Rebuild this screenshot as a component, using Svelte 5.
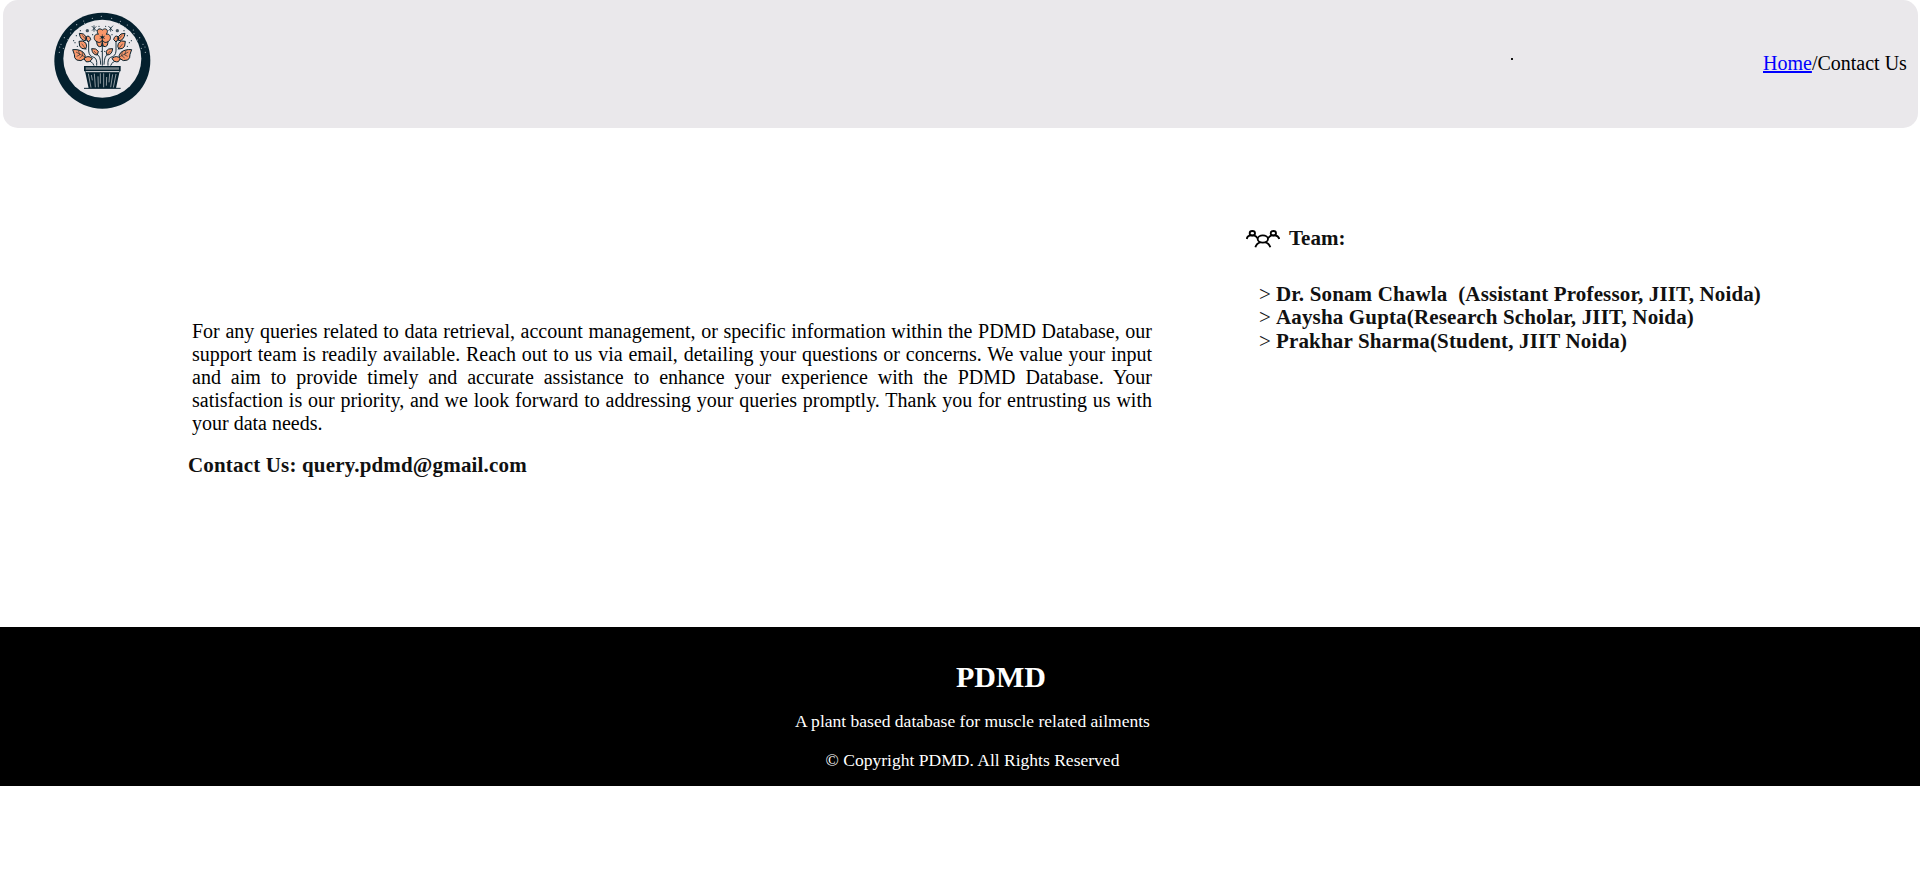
<script>
  const team = [
    'Dr. Sonam Chawla\u00a0 (Assistant Professor, JIIT, Noida)',
    'Aaysha Gupta(Research Scholar, JIIT, Noida)',
    'Prakhar Sharma(Student, JIIT Noida)'
  ];
  const rimDots = [
    [58, 157], [59, 141], [70, 145], [63, 133], [73, 113], [84, 119], [92, 99], [93, 89],
    [110, 74], [118, 82], [131, 63], [134, 70], [157, 55], [184, 49], [215, 55], [241, 64],
    [238, 71], [262, 75], [255, 83], [280, 90], [282, 101], [299, 113], [292, 120], [309, 133],
    [304, 145], [315, 141], [316, 157]
  ];
  const sparks = [
    [121, 92], [109, 107], [101, 122], [112, 139], [177, 79], [197, 79], [158, 104], [121, 128],
    [252, 92], [262, 107], [274, 122], [262, 139], [216, 104], [184, 154], [194, 154], [105, 128], [268, 128]
  ];
</script>

<header>
  <svg class="logo" viewBox="0 0 372 372" aria-hidden="true">
    <circle cx="187" cy="182" r="144" fill="#04202e" />
    <circle cx="187" cy="176" r="117" fill="#eae8eb" />
    {#each rimDots as [x, y]}
      <circle cx={x} cy={y} r="1.8" fill="#b3bcc2" />
    {/each}
    {#each sparks as [x, y]}
      <circle cx={x} cy={y} r="1.7" fill="#04202e" />
    {/each}
    <g fill="none" stroke="#04202e" stroke-width="2.7">
      <path d="M187 135V197M146 120V153Q147 169 162 172Q172 176 170 197M228 120V153Q227 169 212 172Q202 176 204 197M171 163Q182 168 182 194M203 163Q193 168 192 194M140 181Q157 183 162 197M234 181Q217 183 212 197" />
      <path stroke-width="2.2" d="M155 78L170 93M169 79L156 92M162 76V95M205 78L219 93M219 77L206 92M212 82V95" />
    </g>
    <circle cx="142" cy="92" r="5" fill="#435560" />
    <circle cx="232" cy="92" r="5" fill="#435560" />
    <g fill="#f9976a" stroke="#04202e" stroke-width="3" stroke-linejoin="round">
      <path d="M98 149Q119 147 131 158Q138 166 135 175Q123 186 110 180Q102 175 103 163Z" />
      <path d="M275 149Q254 147 242 158Q235 166 238 175Q250 186 263 180Q271 175 270 163Z" />
      <path d="M132 176Q143 164 157 175Q151 188 138 185ZM241 176Q230 164 216 175Q222 188 235 185Z" />
      <path d="M117 124Q130 119 138 130Q142 139 137 147Q123 148 119 138ZM256 124Q243 119 235 130Q231 139 236 147Q250 148 254 138Z" />
      <path d="M118 100Q132 99 138 110L137 122Q121 122 118 100ZM255 100Q241 99 235 110L236 122Q252 122 255 100Z" />
      <path d="M139 110Q149 104 152 119L145 126Q138 120 139 110ZM234 110Q224 104 221 119L228 126Q235 120 234 110Z" />
      <path d="M155 146Q169 144 175 154L172 165Q157 165 155 146ZM218 146Q204 144 198 154L201 165Q216 165 218 146Z" />
      <path d="M170 123Q170 144 184 139L187 127L190 139Q204 144 204 123Z" />
      <path d="M175 103C166 89 178 82 187 90C196 82 208 89 199 103C213 99 216 121 203 125C195 131 189 124 187 120C185 124 179 131 171 125C158 121 161 99 175 103Z" />
    </g>
    <g fill="none" stroke="#04202e" stroke-width="1.7">
      <path d="M108 156L135 171M115 151L119 165L110 169M126 154L128 167L119 174M265 156L238 171M258 151L254 165L263 169M247 154L245 167L254 174" />
      <path d="M125 131L139 149M248 131L234 149M127 106L144 126M246 106L229 126M162 153L171 163M211 153L202 163" />
      <path d="M187 103V120M179 108L195 116M195 108L179 116" />
      <path stroke-width="2.5" d="M187 118V139" />
    </g>
    <circle cx="187" cy="112" r="4" fill="#04202e" />
    <path d="M132 198H242V214H239L228 265H146L135 214H132Z" fill="#04202e" />
    <path d="M137 202H237V209H137Z" fill="#748087" />
    <path d="M137 215H237" stroke="#eae8eb" stroke-width="3" />
    <g fill="none" stroke="#d5d7da" stroke-width="2">
      <path d="M145 221L153 263M154 225L157 241M163 221L166 262M174 229L175 262M181 220V251M191 220V262M200 231L199 257M209 220L207 247M218 223L212 262M228 222L220 263" />
    </g>
    <path d="M132 265H242" stroke="#04202e" stroke-width="3" />
  </svg>
  <span class="speck"></span>
  <nav><a href="#home">Home</a>/Contact Us</nav>
</header>

<main>
  <section class="about">
    <p>For any queries related to data retrieval, account management, or specific information within the PDMD Database, our support team is readily available. Reach out to us via email, detailing your questions or concerns. We value your input and aim to provide timely and accurate assistance to enhance your experience with the PDMD Database. Your satisfaction is our priority, and we look forward to addressing your queries promptly. Thank you for entrusting us with your data needs.</p>
    <div class="mail">Contact Us: query.pdmd@gmail.com</div>
  </section>
  <section class="team">
    <div class="title">
      <svg viewBox="0 0 102 54" fill="none" stroke="#000" stroke-width="5.5" aria-hidden="true">
        <ellipse cx="19" cy="10" rx="8" ry="7" />
        <ellipse cx="82" cy="10" rx="8" ry="7" />
        <path d="M2 27Q4 17 14 16H24Q31 18 35 25M100 27Q97 17 87 16H77Q70 18 66 25" />
        <ellipse cx="50.5" cy="27" rx="15.5" ry="11" />
        <path d="M28 52Q32 39 43 37M73 52Q69 39 58 37" />
      </svg>
      <span>Team:</span>
    </div>
    <ul>
      {#each team as member}
        <li><span class="mark">&gt;</span><span>{member}</span></li>
      {/each}
    </ul>
  </section>
</main>

<footer>
  <h2>PDMD</h2>
  <p class="tagline">A plant based database for muscle related ailments</p>
  <p class="rights">© Copyright PDMD. All Rights Reserved</p>
</footer>

<style>
  :global(body) {
    margin: 0;
    background: #fff;
    color: #000;
    font-family: "Liberation Serif", "Times New Roman", serif;
    font-size: 20px;
    line-height: 23px;
  }
  header {
    box-sizing: border-box;
    height: 128px;
    margin: 0 2px 0 3px;
    padding: 0 10px 0 37px;
    display: flex;
    align-items: flex-start;
    background: #eae8eb;
    border-radius: 15px;
  }
  .logo {
    width: 124px;
    height: 124px;
  }
  .speck {
    width: 2px;
    height: 2px;
    margin: 58px 0 0 auto;
    background: #111;
  }
  nav {
    width: 145px;
    margin: 52px 0 0 250px;
    white-space: nowrap;
  }
  a {
    color: #00f;
  }
  main {
    height: 499px;
    display: flex;
    align-items: flex-start;
  }
  .about {
    width: 964px;
    padding: 192px 0 0 188px;
  }
  .about p {
    margin: 0 0 0 4px;
    text-align: justify;
  }
  .mail {
    margin-top: 19px;
    font-weight: bold;
    font-size: 21px;
    letter-spacing: 0.17px;
    color: #111;
  }
  .team {
    margin-left: 94px;
    padding-top: 99px;
    font-weight: bold;
    font-size: 21px;
    color: #111;
  }
  .title {
    display: flex;
  }
  .title svg {
    width: 34px;
    height: 18px;
    margin: 3px 9px 0 0;
  }
  ul {
    margin: 33px 0 0 13px;
    padding: 0;
    list-style: none;
    line-height: 23.4px;
    letter-spacing: 0.15px;
  }
  li {
    display: flex;
    white-space: pre;
  }
  .mark {
    width: 17px;
    font-weight: normal;
  }
  footer {
    height: 159px;
    box-sizing: border-box;
    padding-top: 32px;
    display: flex;
    flex-direction: column;
    align-items: center;
    background: #000;
    color: #fff;
    font-size: 17.55px;
  }
  h2 {
    margin: 0 0 0 82px;
    font-size: 30px;
    line-height: 35px;
  }
  footer p {
    margin: 0 0 0 25px;
    line-height: 21px;
  }
  .tagline {
    padding-top: 17px;
  }
  .rights {
    padding-top: 18px;
  }
</style>
